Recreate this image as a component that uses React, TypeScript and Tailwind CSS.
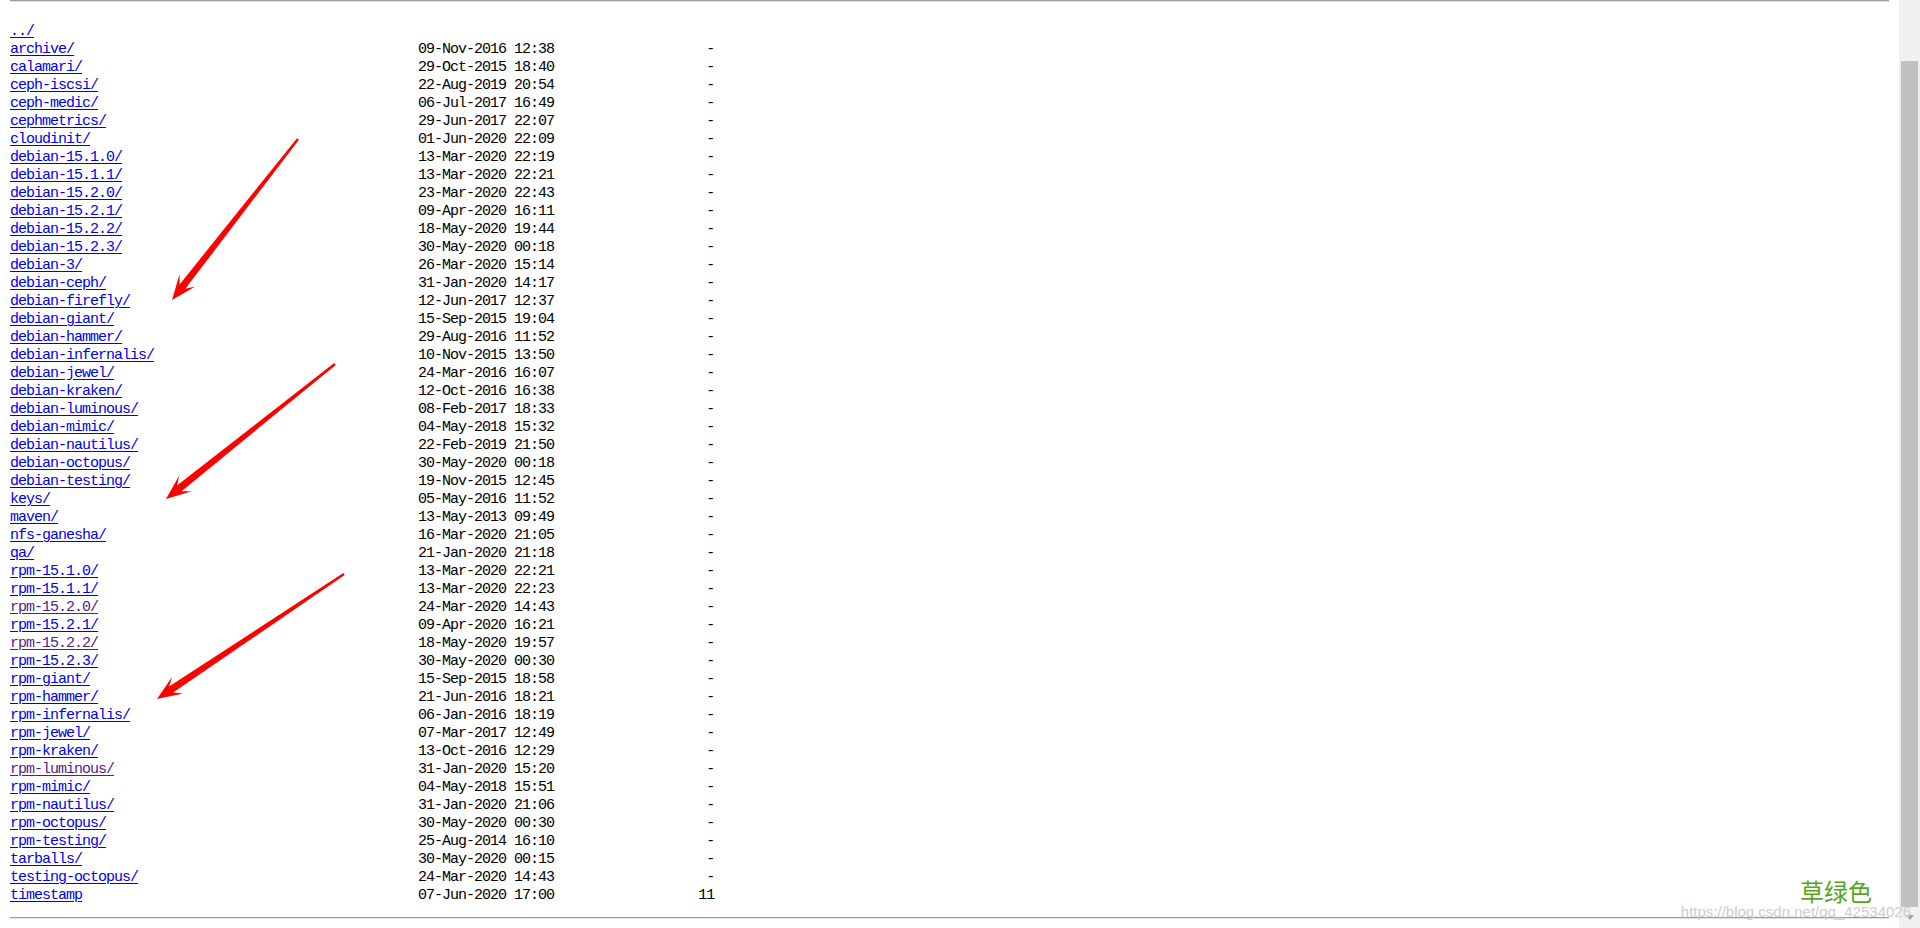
import React from "react";

type Entry = { name: string; date: string; size: string; visited?: boolean };

const entries: Entry[] = [
  { name: "archive/", date: "09-Nov-2016 12:38", size: "-" },
  { name: "calamari/", date: "29-Oct-2015 18:40", size: "-" },
  { name: "ceph-iscsi/", date: "22-Aug-2019 20:54", size: "-" },
  { name: "ceph-medic/", date: "06-Jul-2017 16:49", size: "-" },
  { name: "cephmetrics/", date: "29-Jun-2017 22:07", size: "-" },
  { name: "cloudinit/", date: "01-Jun-2020 22:09", size: "-" },
  { name: "debian-15.1.0/", date: "13-Mar-2020 22:19", size: "-" },
  { name: "debian-15.1.1/", date: "13-Mar-2020 22:21", size: "-" },
  { name: "debian-15.2.0/", date: "23-Mar-2020 22:43", size: "-" },
  { name: "debian-15.2.1/", date: "09-Apr-2020 16:11", size: "-" },
  { name: "debian-15.2.2/", date: "18-May-2020 19:44", size: "-" },
  { name: "debian-15.2.3/", date: "30-May-2020 00:18", size: "-" },
  { name: "debian-3/", date: "26-Mar-2020 15:14", size: "-" },
  { name: "debian-ceph/", date: "31-Jan-2020 14:17", size: "-" },
  { name: "debian-firefly/", date: "12-Jun-2017 12:37", size: "-" },
  { name: "debian-giant/", date: "15-Sep-2015 19:04", size: "-" },
  { name: "debian-hammer/", date: "29-Aug-2016 11:52", size: "-" },
  { name: "debian-infernalis/", date: "10-Nov-2015 13:50", size: "-" },
  { name: "debian-jewel/", date: "24-Mar-2016 16:07", size: "-" },
  { name: "debian-kraken/", date: "12-Oct-2016 16:38", size: "-" },
  { name: "debian-luminous/", date: "08-Feb-2017 18:33", size: "-" },
  { name: "debian-mimic/", date: "04-May-2018 15:32", size: "-" },
  { name: "debian-nautilus/", date: "22-Feb-2019 21:50", size: "-" },
  { name: "debian-octopus/", date: "30-May-2020 00:18", size: "-" },
  { name: "debian-testing/", date: "19-Nov-2015 12:45", size: "-" },
  { name: "keys/", date: "05-May-2016 11:52", size: "-" },
  { name: "maven/", date: "13-May-2013 09:49", size: "-" },
  { name: "nfs-ganesha/", date: "16-Mar-2020 21:05", size: "-" },
  { name: "qa/", date: "21-Jan-2020 21:18", size: "-" },
  { name: "rpm-15.1.0/", date: "13-Mar-2020 22:21", size: "-" },
  { name: "rpm-15.1.1/", date: "13-Mar-2020 22:23", size: "-" },
  { name: "rpm-15.2.0/", date: "24-Mar-2020 14:43", size: "-", visited: true },
  { name: "rpm-15.2.1/", date: "09-Apr-2020 16:21", size: "-" },
  { name: "rpm-15.2.2/", date: "18-May-2020 19:57", size: "-", visited: true },
  { name: "rpm-15.2.3/", date: "30-May-2020 00:30", size: "-" },
  { name: "rpm-giant/", date: "15-Sep-2015 18:58", size: "-" },
  { name: "rpm-hammer/", date: "21-Jun-2016 18:21", size: "-" },
  { name: "rpm-infernalis/", date: "06-Jan-2016 18:19", size: "-" },
  { name: "rpm-jewel/", date: "07-Mar-2017 12:49", size: "-" },
  { name: "rpm-kraken/", date: "13-Oct-2016 12:29", size: "-" },
  { name: "rpm-luminous/", date: "31-Jan-2020 15:20", size: "-", visited: true },
  { name: "rpm-mimic/", date: "04-May-2018 15:51", size: "-" },
  { name: "rpm-nautilus/", date: "31-Jan-2020 21:06", size: "-" },
  { name: "rpm-octopus/", date: "30-May-2020 00:30", size: "-" },
  { name: "rpm-testing/", date: "25-Aug-2014 16:10", size: "-" },
  { name: "tarballs/", date: "30-May-2020 00:15", size: "-" },
  { name: "testing-octopus/", date: "24-Mar-2020 14:43", size: "-" },
  { name: "timestamp", date: "07-Jun-2020 17:00", size: "11" },
];

// arrows drawn on the screenshot: [startX, startY, tipX, tipY]
const arrows: [number, number, number, number][] = [
  [298, 139, 172, 300],
  [335, 364, 166, 499],
  [344, 574, 157, 699],
];

const arrowPoints = ([sx, sy, tx, ty]: [number, number, number, number]) => {
  const len = Math.hypot(tx - sx, ty - sy);
  const dx = (tx - sx) / len;
  const dy = (ty - sy) / len;
  const nx = -dy;
  const ny = dx;
  const at = (back: number, side: number) =>
    `${tx - dx * back + nx * side},${ty - dy * back + ny * side}`;
  const pts = [
    `${sx + nx * 1.2},${sy + ny * 1.2}`,
    at(17, 3.6),
    at(25, 10),
    `${tx},${ty}`,
    at(25, -10),
    at(17, -3.6),
    `${sx - nx * 1.2},${sy - ny * 1.2}`,
  ];
  return pts.join(" ");
};

const Row = ({ e }: { e: Entry }) => {
  const pad = " ".repeat(Math.max(1, 51 - e.name.length));
  return (
    <div className="whitespace-pre">
      <a
        href="#"
        className={
          e.visited
            ? "text-[#551a8b] underline underline-offset-2"
            : "text-[#0000ee] underline underline-offset-2"
        }
      >
        {e.name}
      </a>
      {pad}
      {e.date}
      {e.size.padStart(20, " ")}
    </div>
  );
};

export default function App() {
  return (
    <div className="relative flex h-[928px] w-[1920px] overflow-hidden bg-white">
      <div className="flex-1 px-[10px]">
        <div className="h-[2px] border-t border-[#9c9c9c] border-b border-b-[#e4e4e4]" />
        <div
          className="mt-[21px] text-[15px] leading-[18px] tracking-[-1px] text-black"
          style={{ fontFamily: '"Liberation Mono", "DejaVu Sans Mono", monospace' }}
        >
          <div className="whitespace-pre">
            <a href="#" className="text-[#0000ee] underline underline-offset-2">
              ../
            </a>
          </div>
          {entries.map((e) => (
            <Row key={e.name} e={e} />
          ))}
        </div>
        <div className="mt-[12px] h-[2px] border-t border-[#9c9c9c] border-b border-b-[#e4e4e4]" />
      </div>

      <div className="flex w-[21px] flex-col bg-[#f0f0f0] px-[2px]">
        <div className="mt-[61px] h-[846px] bg-[#c1c1c1]" />
        <div className="mt-[8px] flex justify-center">
          <svg width="8" height="5" viewBox="0 0 8 5">
            <path d="M0 0 L8 0 L4 5 Z" fill="#a3a3a3" />
          </svg>
        </div>
      </div>

      <svg className="pointer-events-none absolute left-0 top-0" width="1920" height="928">
        {arrows.map((a, i) => (
          <polygon key={i} points={arrowPoints(a)} fill="#ff0000" />
        ))}
      </svg>

      <div
        className="absolute left-[1800px] top-[880px] text-[24px] leading-[22px] text-[#56a61c]"
        style={{ fontFamily: '"Noto Sans CJK SC", sans-serif' }}
      >
        草绿色
      </div>
      <div
        className="absolute right-[9px] top-[905px] text-[15px] leading-[14px] text-[#cdcdcd]"
        style={{ fontFamily: '"Liberation Sans", Arial, sans-serif' }}
      >
        https://blog.csdn.net/qq_42534026
      </div>
    </div>
  );
}
